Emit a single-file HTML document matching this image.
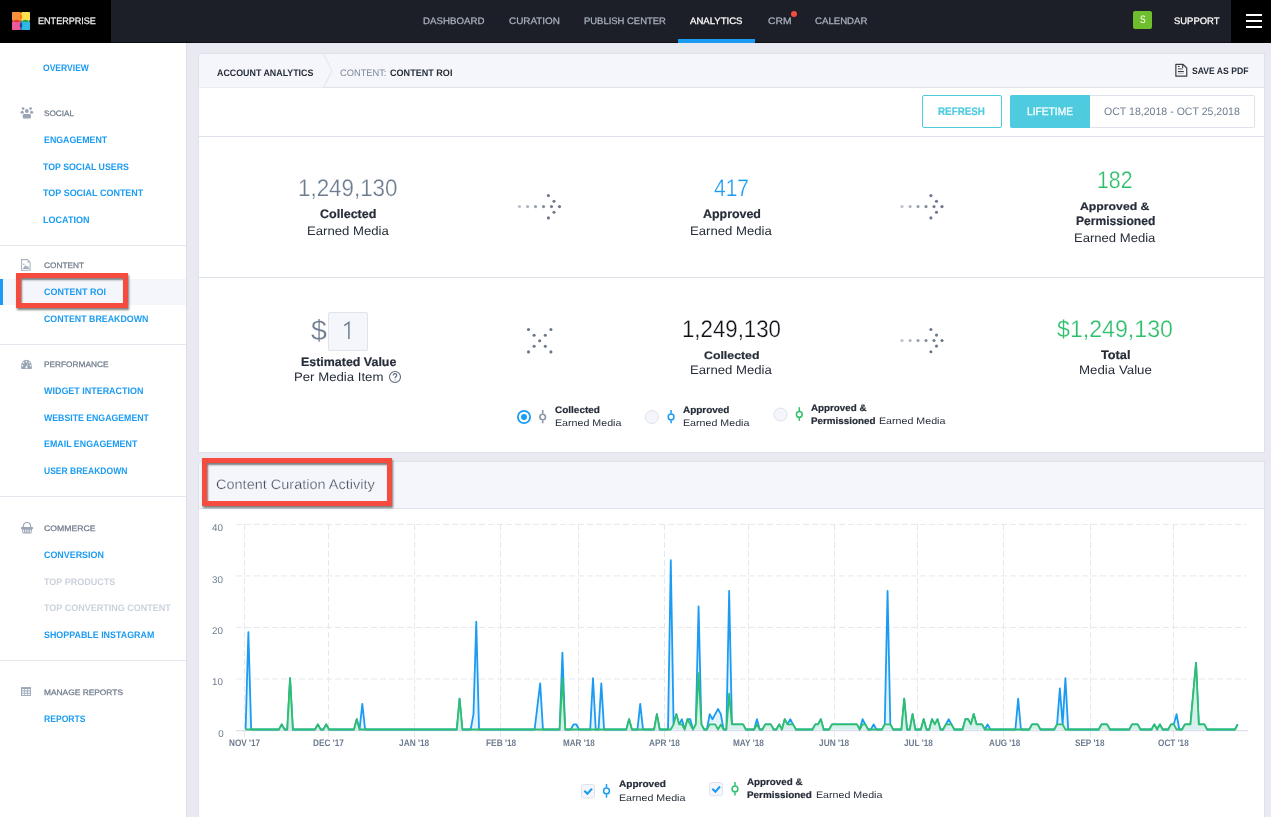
<!DOCTYPE html>
<html><head><meta charset="utf-8">
<style>
html,body{margin:0;padding:0;}
body{width:1271px;height:817px;overflow:hidden;position:relative;background:#e8e9f1;font-family:"Liberation Sans",sans-serif;text-rendering:geometricPrecision;}
.abs{position:absolute;}
.t{position:absolute;white-space:nowrap;transform-origin:0 0;line-height:1;}
</style></head><body>
<!-- NAV -->
<div class="abs" style="left:0;top:0;width:1271px;height:42px;background:#1c1f27;border-bottom:1px solid #0d0f14;"></div>
<div class="abs" style="left:0;top:0;width:111px;height:43px;background:#000;"></div>
<div class="abs" style="left:1231px;top:0;width:40px;height:43px;background:#000;"></div>
<div class="abs" style="left:678px;top:39px;width:77px;height:4px;background:#1b9cf2;"></div>
<div class="abs" style="left:791px;top:11.3px;width:6px;height:6px;border-radius:50%;background:#f64c3f;"></div>
<div class="abs" style="left:1133px;top:11px;width:19px;height:18px;border-radius:2px;background:#6fbe2d;"></div>
<div class="abs" style="left:1246px;top:14px;width:16px;height:2px;background:#fff;"></div>
<div class="abs" style="left:1246px;top:19.5px;width:16px;height:2px;background:#fff;"></div>
<div class="abs" style="left:1246px;top:25.5px;width:16px;height:2px;background:#fff;"></div>
<svg class="abs" style="left:12px;top:12px" width="18" height="18" viewBox="0 0 18 18">
 <g style="isolation:isolate">
 <path style="mix-blend-mode:multiply" d="M0.4,0 L8.3,0 Q12,4.5 8.7,8.7 Q4.5,12 0,8.3 L0,0.4 Z" fill="#f8913c"/>
 <path style="mix-blend-mode:multiply" d="M17.6,0 L9.7,0 Q6,4.5 9.3,8.7 Q13.5,12 18,8.3 L18,0.4 Z" fill="#fde24e"/>
 <path style="mix-blend-mode:multiply" d="M0.4,18 L8.3,18 Q12,13.5 8.7,9.3 Q4.5,6 0,9.7 L0,17.6 Z" fill="#eb5b9c"/>
 <path style="mix-blend-mode:multiply" d="M17.6,18 L9.7,18 Q6,13.5 9.3,9.3 Q13.5,6 18,9.7 L18,17.6 Z" fill="#2cb9e6"/>
 </g>
</svg>

<!-- SIDEBAR -->
<div class="abs" style="left:0;top:43px;width:186px;height:774px;background:#fff;border-right:1px solid #dde0ea;"></div>
<div class="abs" style="left:0;top:245px;width:186px;height:1px;background:#e4e7ee;"></div>
<div class="abs" style="left:0;top:344px;width:186px;height:1px;background:#e4e7ee;"></div>
<div class="abs" style="left:0;top:496px;width:186px;height:1px;background:#e4e7ee;"></div>
<div class="abs" style="left:0;top:660px;width:186px;height:1px;background:#e4e7ee;"></div>
<div class="abs" style="left:0;top:279px;width:186px;height:26px;background:#f5f6fb;"></div>
<div class="abs" style="left:0;top:279px;width:3px;height:26px;background:#1b9cf2;"></div>
<svg class="abs" style="left:0;top:0" width="186" height="817" viewBox="0 0 186 817">
 <g fill="#9aa6b6">
  <circle cx="23.1" cy="108.6" r="1.4"/><circle cx="30.6" cy="108.6" r="1.4"/>
  <circle cx="26.8" cy="110.9" r="2.0"/>
  <ellipse cx="22.2" cy="112.2" rx="1.6" ry="1.5"/><ellipse cx="31.6" cy="112.2" rx="1.6" ry="1.5"/>
  <rect x="22.7" y="113.9" width="8.3" height="4.6" rx="1.5"/>
 </g>
 <g fill="none" stroke="#a9b3c1" stroke-width="1.1">
  <path d="M21.5,259.6 H27.5 L30.1,262.3 V270.2 H21.5 Z"/>
 </g>
 <g fill="#a3adbb">
  <path d="M22.8,269 L25.2,265 L27,267 L28,265.6 L29,269 Z"/>
  <circle cx="23.7" cy="264.2" r="0.8"/>
  <circle cx="28" cy="262" r="0.8"/>
 </g>
 <path d="M21.2,369 C20.4,362.5 23.6,359.8 26.45,359.8 C29.3,359.8 32.5,362.5 31.7,369 Z" fill="#9aa6b6"/>
 <g fill="#fff"><circle cx="22.4" cy="365.6" r="0.8"/><circle cx="23.6" cy="362.8" r="0.8"/><circle cx="26.45" cy="361.6" r="0.8"/><circle cx="29.3" cy="362.8" r="0.8"/><circle cx="30.5" cy="365.6" r="0.8"/>
 <path d="M26,367.8 L27.8,362.5 L27,367.8 Z" /><circle cx="26.4" cy="367.6" r="1"/></g>
 <g fill="#9aa6b6">
  <path d="M23.3,527 Q23.3,522.5 27,522.5 Q30.7,522.5 30.7,527" fill="none" stroke="#9aa6b6" stroke-width="1.1"/>
  <rect x="21" y="527" width="12" height="1.9" rx="0.5"/>
  <path d="M21.8,528.8 H32.2 L31.3,533.6 H22.7 Z"/>
 </g>
 <g fill="#fff"><rect x="23.2" y="529.6" width="0.9" height="2.9"/><rect x="25.4" y="529.6" width="0.9" height="2.9"/><rect x="27.6" y="529.6" width="0.9" height="2.9"/><rect x="29.8" y="529.6" width="0.9" height="2.9"/></g>
 <g>
  <rect x="21" y="687.1" width="10" height="8.8" fill="#9aa6b6"/>
  <g fill="#fff">
   <rect x="22" y="689.1" width="2.3" height="1.3"/><rect x="24.9" y="689.1" width="2.3" height="1.3"/><rect x="27.8" y="689.1" width="2.3" height="1.3"/>
   <rect x="22" y="691.3" width="2.3" height="1.6" fill="#e9edf2"/><rect x="24.9" y="691.3" width="2.3" height="1.6" fill="#e9edf2"/><rect x="27.8" y="691.3" width="2.3" height="1.6" fill="#e9edf2"/>
   <rect x="22" y="693.7" width="2.3" height="1.3"/><rect x="24.9" y="693.7" width="2.3" height="1.3"/><rect x="27.8" y="693.7" width="2.3" height="1.3"/>
  </g>
 </g>
</svg>
<div class="abs" style="left:16px;top:273px;width:102px;height:25px;border:5px solid #f64c3f;box-shadow:1px 2px 2px rgba(0,0,0,.5), inset 1px 2px 2px rgba(0,0,0,.5);"></div>

<!-- PANEL 1 -->
<div class="abs" style="left:198px;top:53px;width:1065px;height:398px;background:#fff;border:1px solid #dfe2ea;"></div>
<div class="abs" style="left:199px;top:54px;width:1065px;height:33px;background:#f5f6fb;border-bottom:1px solid #dfe2ea;"></div>
<svg class="abs" style="left:199px;top:54px" width="150" height="34" viewBox="0 0 150 34">
 <path d="M0,0 H124.5 L133,16.8 L124.5,33.5 H0 Z" fill="#f5f6fb" stroke="none"/>
 <path d="M124.5,0 L133,16.8 L124.5,33.5" fill="none" stroke="#dfe2ea" stroke-width="1"/>
</svg>
<div class="abs" style="left:199px;top:136px;width:1065px;height:1px;background:#dfe2ea;"></div>
<div class="abs" style="left:199px;top:277px;width:1065px;height:1px;background:#dfe2ea;"></div>
<!-- pdf icon -->
<svg class="abs" style="left:1174px;top:63px" width="15" height="15" viewBox="0 0 15 15">
 <path d="M1.85,1.45 H9.1 L12.75,5 V13.2 H1.85 Z" fill="none" stroke="#3a3f47" stroke-width="1.2" stroke-linejoin="round"/>
 <path d="M8.7,1.4 V4.9" fill="none" stroke="#3a3f47" stroke-width="1.1"/>
 <rect x="3.9" y="2.9" width="1.9" height="1.0" fill="#3a3f47"/>
 <rect x="3.9" y="5.4" width="4.8" height="1.0" fill="#4a4f57"/>
 <rect x="3.9" y="8.0" width="5.9" height="1.0" fill="#3a3f47"/>
 <rect x="3.9" y="9.7" width="5.9" height="0.9" fill="#a0a4ab"/>
</svg>
<!-- buttons -->
<div class="abs" style="left:922px;top:95px;width:78px;height:31px;border:1px solid #4fcbe0;border-radius:2px;background:#fff;"></div>
<div class="abs" style="left:1090px;top:95px;width:164px;height:31px;border:1px solid #dfe2ea;border-left:none;border-radius:0 2px 2px 0;background:#fff;"></div>
<div class="abs" style="left:1010px;top:95px;width:80px;height:33px;background:#4fcbe0;border-radius:2px 0 0 2px;"></div>
<!-- input box -->
<div class="abs" style="left:328px;top:312px;width:38px;height:37px;border:1px solid #dfe3ec;border-radius:2px;background:#f5f6fb;"></div>
<svg class="abs" style="left:388px;top:370px" width="14" height="14" viewBox="0 0 14 14">
 <circle cx="7" cy="7" r="5.5" fill="none" stroke="#5f6b7e" stroke-width="1.1"/>
 <path d="M5.2,5.4 Q5.2,3.6 7,3.6 Q8.8,3.6 8.8,5.2 Q8.8,6.3 7.5,6.9 Q7,7.2 7,8.2" fill="none" stroke="#5f6b7e" stroke-width="1.2"/>
 <circle cx="7" cy="9.9" r="0.7" fill="#9aa3b0"/>
</svg>
<svg class="abs" style="left:340px;top:318px" width="14" height="24" viewBox="340 318 14 24"><path d="M344.3,325.6 L348.9,322.4 V339" fill="none" stroke="#6e7c8f" stroke-width="1.5" stroke-linejoin="miter"/></svg>
<!-- legend -->
<svg class="abs" style="left:0;top:0" width="1271" height="817" viewBox="0 0 1271 817">
 <circle cx="524" cy="417" r="6.1" fill="#fff" stroke="#1b9cf2" stroke-width="1.8"/>
 <circle cx="524" cy="417" r="3" fill="#1b9cf2"/>
 <g stroke="#8a95a5" stroke-width="1.6" fill="none"><line x1="542.7" y1="410" x2="542.7" y2="413.6"/><line x1="542.7" y1="420.4" x2="542.7" y2="423.2"/><circle cx="542.7" cy="417" r="2.8" fill="#fff"/></g>
 <circle cx="651.9" cy="417" r="6.5" fill="#f5f6fb" stroke="#dfe3ee" stroke-width="1"/>
 <g stroke="#1b9cf2" stroke-width="1.5" fill="none"><line x1="671.1" y1="410" x2="671.1" y2="413.6"/><line x1="671.1" y1="420.4" x2="671.1" y2="423.2"/><circle cx="671.1" cy="417" r="2.9" fill="#fff"/></g>
 <circle cx="780.5" cy="414.6" r="6.5" fill="#f5f6fb" stroke="#dfe3ee" stroke-width="1"/>
 <g stroke="#2fbf6b" stroke-width="1.5" fill="none"><line x1="799.3" y1="407.2" x2="799.3" y2="411"/><line x1="799.3" y1="417.8" x2="799.3" y2="420.8"/><circle cx="799.3" cy="414.4" r="2.9" fill="#fff"/></g>
</svg>
<svg class="abs" style="left:0;top:0" width="1271" height="817" viewBox="0 0 1271 817">
<circle cx="519.5" cy="206.6" r="1.55" fill="#6b7789" fill-opacity="0.45"/><circle cx="527.6" cy="206.6" r="1.55" fill="#6b7789" fill-opacity="0.55"/><circle cx="535.5" cy="206.6" r="1.55" fill="#6b7789" fill-opacity="0.7"/><circle cx="543.5" cy="206.6" r="1.55" fill="#6b7789" fill-opacity="0.85"/><circle cx="551.5" cy="206.6" r="1.55" fill="#6b7789" fill-opacity="0.95"/><circle cx="559.5" cy="206.6" r="1.55" fill="#6b7789" fill-opacity="1"/><circle cx="548.4" cy="195.6" r="1.55" fill="#6b7789"/><circle cx="554.0" cy="201.2" r="1.55" fill="#6b7789"/><circle cx="554.0" cy="212.2" r="1.55" fill="#6b7789"/><circle cx="548.4" cy="217.9" r="1.55" fill="#6b7789"/>
<circle cx="902.0" cy="206.6" r="1.55" fill="#6b7789" fill-opacity="0.45"/><circle cx="910.1" cy="206.6" r="1.55" fill="#6b7789" fill-opacity="0.55"/><circle cx="918.0" cy="206.6" r="1.55" fill="#6b7789" fill-opacity="0.7"/><circle cx="926.0" cy="206.6" r="1.55" fill="#6b7789" fill-opacity="0.85"/><circle cx="934.0" cy="206.6" r="1.55" fill="#6b7789" fill-opacity="0.95"/><circle cx="942.0" cy="206.6" r="1.55" fill="#6b7789" fill-opacity="1"/><circle cx="930.9" cy="195.6" r="1.55" fill="#6b7789"/><circle cx="936.5" cy="201.2" r="1.55" fill="#6b7789"/><circle cx="936.5" cy="212.2" r="1.55" fill="#6b7789"/><circle cx="930.9" cy="217.9" r="1.55" fill="#6b7789"/>
<circle cx="539.7" cy="340.7" r="1.55" fill="#6b7789"/><circle cx="528.5" cy="329.5" r="1.55" fill="#6b7789"/><circle cx="534.1" cy="335.2" r="1.55" fill="#6b7789"/><circle cx="545.3" cy="335.2" r="1.55" fill="#6b7789"/><circle cx="550.9" cy="329.5" r="1.55" fill="#6b7789"/><circle cx="534.1" cy="346.3" r="1.55" fill="#6b7789"/><circle cx="545.3" cy="346.3" r="1.55" fill="#6b7789"/><circle cx="528.5" cy="351.9" r="1.55" fill="#6b7789"/><circle cx="550.9" cy="351.9" r="1.55" fill="#6b7789"/>
<circle cx="902.0" cy="340.5" r="1.55" fill="#6b7789" fill-opacity="0.45"/><circle cx="910.1" cy="340.5" r="1.55" fill="#6b7789" fill-opacity="0.55"/><circle cx="918.0" cy="340.5" r="1.55" fill="#6b7789" fill-opacity="0.7"/><circle cx="926.0" cy="340.5" r="1.55" fill="#6b7789" fill-opacity="0.85"/><circle cx="934.0" cy="340.5" r="1.55" fill="#6b7789" fill-opacity="0.95"/><circle cx="942.0" cy="340.5" r="1.55" fill="#6b7789" fill-opacity="1"/><circle cx="930.9" cy="329.5" r="1.55" fill="#6b7789"/><circle cx="936.5" cy="335.1" r="1.55" fill="#6b7789"/><circle cx="936.5" cy="346.1" r="1.55" fill="#6b7789"/><circle cx="930.9" cy="351.8" r="1.55" fill="#6b7789"/>
</svg>

<!-- PANEL 2 -->
<div class="abs" style="left:198px;top:461px;width:1065px;height:370px;background:#fff;border:1px solid #dfe2ea;"></div>
<div class="abs" style="left:199px;top:462px;width:1065px;height:46px;background:#f5f6fb;border-bottom:1px solid #dfe2ea;"></div>
<svg class="abs" style="left:0;top:0" width="1271" height="817" viewBox="0 0 1271 817">
<g stroke="#e6e8ef" stroke-width="1" stroke-dasharray="6 3" fill="none"><line x1="236" y1="678.97" x2="1246" y2="678.97" /><line x1="236" y1="627.44" x2="1246" y2="627.44" /><line x1="236" y1="575.91" x2="1246" y2="575.91" /><line x1="236" y1="524.38" x2="1246" y2="524.38" /><line x1="244.5" y1="524" x2="244.5" y2="738" /><line x1="328.5" y1="524" x2="328.5" y2="738" /><line x1="414.5" y1="524" x2="414.5" y2="738" /><line x1="500.5" y1="524" x2="500.5" y2="738" /><line x1="578.5" y1="524" x2="578.5" y2="738" /><line x1="664.5" y1="524" x2="664.5" y2="738" /><line x1="748.5" y1="524" x2="748.5" y2="738" /><line x1="834.5" y1="524" x2="834.5" y2="738" /><line x1="917.5" y1="524" x2="917.5" y2="738" /><line x1="1003.5" y1="524" x2="1003.5" y2="738" /><line x1="1090.5" y1="524" x2="1090.5" y2="738" /><line x1="1173.5" y1="524" x2="1173.5" y2="738" /></g>
<line x1="236" y1="730.6" x2="1248" y2="730.6" stroke="#dde0ec" stroke-width="1.2"/>
<path d="M245.60,729.5 L245.60,729.50 248.38,632.03 251.16,729.50 253.94,729.50 256.72,729.50 259.50,729.50 262.27,729.50 265.05,729.50 267.83,729.50 270.61,729.50 273.39,729.50 276.17,729.50 278.95,729.50 281.73,724.37 284.51,729.50 287.28,729.50 290.06,678.20 292.84,729.50 295.62,729.50 298.40,729.50 301.18,729.50 303.96,729.50 306.74,729.50 309.52,729.50 312.30,729.50 315.07,729.50 317.85,724.37 320.63,729.50 323.41,729.50 326.19,724.37 328.97,729.50 331.75,729.50 334.53,729.50 337.31,729.50 340.09,729.50 342.87,729.50 345.64,729.50 348.42,729.50 351.20,729.50 353.98,729.50 356.76,719.24 359.54,729.50 362.32,703.85 365.10,729.50 367.88,729.50 370.65,729.50 373.43,729.50 376.21,729.50 378.99,729.50 381.77,729.50 384.55,729.50 387.33,729.50 390.11,729.50 392.89,729.50 395.67,729.50 398.44,729.50 401.22,729.50 404.00,729.50 406.78,729.50 409.56,729.50 412.34,729.50 415.12,729.50 417.90,729.50 420.68,729.50 423.46,729.50 426.24,729.50 429.01,729.50 431.79,729.50 434.57,729.50 437.35,729.50 440.13,729.50 442.91,729.50 445.69,729.50 448.47,729.50 451.25,729.50 454.02,729.50 456.80,729.50 459.58,698.72 462.36,729.50 465.14,729.50 467.92,729.50 470.70,729.50 473.48,714.11 476.26,621.77 479.04,729.50 481.81,729.50 484.59,729.50 487.37,729.50 490.15,729.50 492.93,729.50 495.71,729.50 498.49,729.50 501.27,729.50 504.05,729.50 506.83,729.50 509.61,729.50 512.38,729.50 515.16,729.50 517.94,729.50 520.72,729.50 523.50,729.50 526.28,729.50 529.06,729.50 531.84,729.50 534.62,729.50 537.39,706.41 540.17,683.33 542.95,729.50 545.73,729.50 548.51,729.50 551.29,729.50 554.07,729.50 556.85,729.50 559.63,729.50 562.41,652.55 565.18,729.50 567.96,729.50 570.74,729.50 573.52,724.37 576.30,724.37 579.08,729.50 581.86,729.50 584.64,729.50 587.42,729.50 590.20,729.50 592.98,678.20 595.75,729.50 598.53,729.50 601.31,683.33 604.09,729.50 606.87,729.50 609.65,729.50 612.43,729.50 615.21,729.50 617.99,729.50 620.76,729.50 623.54,729.50 626.32,729.50 629.10,719.24 631.88,729.50 634.66,729.50 637.44,729.50 640.22,703.85 643.00,729.50 645.78,729.50 648.55,729.50 651.33,729.50 654.11,729.50 656.89,714.11 659.67,729.50 662.45,729.50 665.23,729.50 668.01,729.50 670.79,560.21 673.57,724.37 676.35,714.11 679.12,724.37 681.90,719.24 684.68,729.50 687.46,719.24 690.24,719.24 693.02,729.50 695.80,724.37 698.58,606.38 701.36,724.37 704.13,729.50 706.91,729.50 709.69,714.11 712.47,719.24 715.25,714.11 718.03,708.98 720.81,714.11 723.59,729.50 726.37,729.50 729.15,590.99 731.92,724.37 734.70,724.37 737.48,724.37 740.26,724.37 743.04,724.37 745.82,729.50 748.60,729.50 751.38,729.50 754.16,729.50 756.94,719.24 759.72,729.50 762.49,729.50 765.27,724.37 768.05,724.37 770.83,724.37 773.61,729.50 776.39,729.50 779.17,724.37 781.95,729.50 784.73,719.24 787.50,724.37 790.28,719.24 793.06,724.37 795.84,729.50 798.62,729.50 801.40,729.50 804.18,729.50 806.96,729.50 809.74,729.50 812.52,729.50 815.29,724.37 818.07,724.37 820.85,719.24 823.63,729.50 826.41,729.50 829.19,729.50 831.97,724.37 834.75,724.37 837.53,724.37 840.31,724.37 843.09,724.37 845.86,724.37 848.64,724.37 851.42,724.37 854.20,724.37 856.98,724.37 859.76,729.50 862.54,719.24 865.32,724.37 868.10,729.50 870.88,729.50 873.65,724.37 876.43,729.50 879.21,729.50 881.99,729.50 884.77,724.37 887.55,590.99 890.33,724.37 893.11,729.50 895.89,729.50 898.66,729.50 901.44,729.50 904.22,698.72 907.00,729.50 909.78,729.50 912.56,714.11 915.34,729.50 918.12,729.50 920.90,729.50 923.68,719.24 926.46,729.50 929.23,729.50 932.01,719.24 934.79,724.37 937.57,719.24 940.35,729.50 943.13,729.50 945.91,724.37 948.69,719.24 951.47,724.37 954.25,729.50 957.02,729.50 959.80,729.50 962.58,729.50 965.36,719.24 968.14,719.24 970.92,724.37 973.70,714.11 976.48,724.37 979.26,724.37 982.03,724.37 984.81,729.50 987.59,724.37 990.37,729.50 993.15,729.50 995.93,729.50 998.71,729.50 1001.49,729.50 1004.27,729.50 1007.05,729.50 1009.83,729.50 1012.60,729.50 1015.38,729.50 1018.16,698.72 1020.94,729.50 1023.72,729.50 1026.50,729.50 1029.28,729.50 1032.06,724.37 1034.84,724.37 1037.62,724.37 1040.39,729.50 1043.17,729.50 1045.95,729.50 1048.73,729.50 1051.51,729.50 1054.29,729.50 1057.07,724.37 1059.85,688.46 1062.63,724.37 1065.40,678.20 1068.18,729.50 1070.96,729.50 1073.74,729.50 1076.52,729.50 1079.30,729.50 1082.08,729.50 1084.86,729.50 1087.64,729.50 1090.42,729.50 1093.19,729.50 1095.97,729.50 1098.75,729.50 1101.53,724.37 1104.31,724.37 1107.09,724.37 1109.87,729.50 1112.65,729.50 1115.43,729.50 1118.21,729.50 1120.98,729.50 1123.76,729.50 1126.54,729.50 1129.32,729.50 1132.10,724.37 1134.88,724.37 1137.66,724.37 1140.44,729.50 1143.22,729.50 1146.00,729.50 1148.77,729.50 1151.55,729.50 1154.33,724.37 1157.11,729.50 1159.89,724.37 1162.67,729.50 1165.45,729.50 1168.23,729.50 1171.01,724.37 1173.79,724.37 1176.56,714.11 1179.34,729.50 1182.12,729.50 1184.90,724.37 1187.68,724.37 1190.46,724.37 1193.24,693.59 1196.02,662.81 1198.80,724.37 1201.58,724.37 1204.36,724.37 1207.13,729.50 1209.91,729.50 1212.69,729.50 1215.47,729.50 1218.25,729.50 1221.03,729.50 1223.81,729.50 1226.59,729.50 1229.37,729.50 1232.14,729.50 1234.92,729.50 1237.70,724.37 L1237.70,729.5 Z" fill="#e4f3fd" />
<polyline points="245.60,729.50 248.38,632.03 251.16,729.50 253.94,729.50 256.72,729.50 259.50,729.50 262.27,729.50 265.05,729.50 267.83,729.50 270.61,729.50 273.39,729.50 276.17,729.50 278.95,729.50 281.73,724.37 284.51,729.50 287.28,729.50 290.06,678.20 292.84,729.50 295.62,729.50 298.40,729.50 301.18,729.50 303.96,729.50 306.74,729.50 309.52,729.50 312.30,729.50 315.07,729.50 317.85,724.37 320.63,729.50 323.41,729.50 326.19,724.37 328.97,729.50 331.75,729.50 334.53,729.50 337.31,729.50 340.09,729.50 342.87,729.50 345.64,729.50 348.42,729.50 351.20,729.50 353.98,729.50 356.76,719.24 359.54,729.50 362.32,703.85 365.10,729.50 367.88,729.50 370.65,729.50 373.43,729.50 376.21,729.50 378.99,729.50 381.77,729.50 384.55,729.50 387.33,729.50 390.11,729.50 392.89,729.50 395.67,729.50 398.44,729.50 401.22,729.50 404.00,729.50 406.78,729.50 409.56,729.50 412.34,729.50 415.12,729.50 417.90,729.50 420.68,729.50 423.46,729.50 426.24,729.50 429.01,729.50 431.79,729.50 434.57,729.50 437.35,729.50 440.13,729.50 442.91,729.50 445.69,729.50 448.47,729.50 451.25,729.50 454.02,729.50 456.80,729.50 459.58,698.72 462.36,729.50 465.14,729.50 467.92,729.50 470.70,729.50 473.48,714.11 476.26,621.77 479.04,729.50 481.81,729.50 484.59,729.50 487.37,729.50 490.15,729.50 492.93,729.50 495.71,729.50 498.49,729.50 501.27,729.50 504.05,729.50 506.83,729.50 509.61,729.50 512.38,729.50 515.16,729.50 517.94,729.50 520.72,729.50 523.50,729.50 526.28,729.50 529.06,729.50 531.84,729.50 534.62,729.50 537.39,706.41 540.17,683.33 542.95,729.50 545.73,729.50 548.51,729.50 551.29,729.50 554.07,729.50 556.85,729.50 559.63,729.50 562.41,652.55 565.18,729.50 567.96,729.50 570.74,729.50 573.52,724.37 576.30,724.37 579.08,729.50 581.86,729.50 584.64,729.50 587.42,729.50 590.20,729.50 592.98,678.20 595.75,729.50 598.53,729.50 601.31,683.33 604.09,729.50 606.87,729.50 609.65,729.50 612.43,729.50 615.21,729.50 617.99,729.50 620.76,729.50 623.54,729.50 626.32,729.50 629.10,719.24 631.88,729.50 634.66,729.50 637.44,729.50 640.22,703.85 643.00,729.50 645.78,729.50 648.55,729.50 651.33,729.50 654.11,729.50 656.89,714.11 659.67,729.50 662.45,729.50 665.23,729.50 668.01,729.50 670.79,560.21 673.57,724.37 676.35,714.11 679.12,724.37 681.90,719.24 684.68,729.50 687.46,719.24 690.24,719.24 693.02,729.50 695.80,724.37 698.58,606.38 701.36,724.37 704.13,729.50 706.91,729.50 709.69,714.11 712.47,719.24 715.25,714.11 718.03,708.98 720.81,714.11 723.59,729.50 726.37,729.50 729.15,590.99 731.92,724.37 734.70,724.37 737.48,724.37 740.26,724.37 743.04,724.37 745.82,729.50 748.60,729.50 751.38,729.50 754.16,729.50 756.94,719.24 759.72,729.50 762.49,729.50 765.27,724.37 768.05,724.37 770.83,724.37 773.61,729.50 776.39,729.50 779.17,724.37 781.95,729.50 784.73,719.24 787.50,724.37 790.28,719.24 793.06,724.37 795.84,729.50 798.62,729.50 801.40,729.50 804.18,729.50 806.96,729.50 809.74,729.50 812.52,729.50 815.29,724.37 818.07,724.37 820.85,719.24 823.63,729.50 826.41,729.50 829.19,729.50 831.97,724.37 834.75,724.37 837.53,724.37 840.31,724.37 843.09,724.37 845.86,724.37 848.64,724.37 851.42,724.37 854.20,724.37 856.98,724.37 859.76,729.50 862.54,719.24 865.32,724.37 868.10,729.50 870.88,729.50 873.65,724.37 876.43,729.50 879.21,729.50 881.99,729.50 884.77,724.37 887.55,590.99 890.33,724.37 893.11,729.50 895.89,729.50 898.66,729.50 901.44,729.50 904.22,698.72 907.00,729.50 909.78,729.50 912.56,714.11 915.34,729.50 918.12,729.50 920.90,729.50 923.68,719.24 926.46,729.50 929.23,729.50 932.01,719.24 934.79,724.37 937.57,719.24 940.35,729.50 943.13,729.50 945.91,724.37 948.69,719.24 951.47,724.37 954.25,729.50 957.02,729.50 959.80,729.50 962.58,729.50 965.36,719.24 968.14,719.24 970.92,724.37 973.70,714.11 976.48,724.37 979.26,724.37 982.03,724.37 984.81,729.50 987.59,724.37 990.37,729.50 993.15,729.50 995.93,729.50 998.71,729.50 1001.49,729.50 1004.27,729.50 1007.05,729.50 1009.83,729.50 1012.60,729.50 1015.38,729.50 1018.16,698.72 1020.94,729.50 1023.72,729.50 1026.50,729.50 1029.28,729.50 1032.06,724.37 1034.84,724.37 1037.62,724.37 1040.39,729.50 1043.17,729.50 1045.95,729.50 1048.73,729.50 1051.51,729.50 1054.29,729.50 1057.07,724.37 1059.85,688.46 1062.63,724.37 1065.40,678.20 1068.18,729.50 1070.96,729.50 1073.74,729.50 1076.52,729.50 1079.30,729.50 1082.08,729.50 1084.86,729.50 1087.64,729.50 1090.42,729.50 1093.19,729.50 1095.97,729.50 1098.75,729.50 1101.53,724.37 1104.31,724.37 1107.09,724.37 1109.87,729.50 1112.65,729.50 1115.43,729.50 1118.21,729.50 1120.98,729.50 1123.76,729.50 1126.54,729.50 1129.32,729.50 1132.10,724.37 1134.88,724.37 1137.66,724.37 1140.44,729.50 1143.22,729.50 1146.00,729.50 1148.77,729.50 1151.55,729.50 1154.33,724.37 1157.11,729.50 1159.89,724.37 1162.67,729.50 1165.45,729.50 1168.23,729.50 1171.01,724.37 1173.79,724.37 1176.56,714.11 1179.34,729.50 1182.12,729.50 1184.90,724.37 1187.68,724.37 1190.46,724.37 1193.24,693.59 1196.02,662.81 1198.80,724.37 1201.58,724.37 1204.36,724.37 1207.13,729.50 1209.91,729.50 1212.69,729.50 1215.47,729.50 1218.25,729.50 1221.03,729.50 1223.81,729.50 1226.59,729.50 1229.37,729.50 1232.14,729.50 1234.92,729.50 1237.70,724.37" fill="none" stroke="#1b9cf2" stroke-width="1.8" stroke-linejoin="round"/>
<path d="M245.60,729.5 L245.60,729.50 248.38,729.50 251.16,729.50 253.94,729.50 256.72,729.50 259.50,729.50 262.27,729.50 265.05,729.50 267.83,729.50 270.61,729.50 273.39,729.50 276.17,729.50 278.95,729.50 281.73,724.37 284.51,729.50 287.28,729.50 290.06,678.20 292.84,729.50 295.62,729.50 298.40,729.50 301.18,729.50 303.96,729.50 306.74,729.50 309.52,729.50 312.30,729.50 315.07,729.50 317.85,724.37 320.63,729.50 323.41,729.50 326.19,724.37 328.97,729.50 331.75,729.50 334.53,729.50 337.31,729.50 340.09,729.50 342.87,729.50 345.64,729.50 348.42,729.50 351.20,729.50 353.98,729.50 356.76,719.24 359.54,729.50 362.32,729.50 365.10,729.50 367.88,729.50 370.65,729.50 373.43,729.50 376.21,729.50 378.99,729.50 381.77,729.50 384.55,729.50 387.33,729.50 390.11,729.50 392.89,729.50 395.67,729.50 398.44,729.50 401.22,729.50 404.00,729.50 406.78,729.50 409.56,729.50 412.34,729.50 415.12,729.50 417.90,729.50 420.68,729.50 423.46,729.50 426.24,729.50 429.01,729.50 431.79,729.50 434.57,729.50 437.35,729.50 440.13,729.50 442.91,729.50 445.69,729.50 448.47,729.50 451.25,729.50 454.02,729.50 456.80,729.50 459.58,698.72 462.36,729.50 465.14,729.50 467.92,729.50 470.70,729.50 473.48,729.50 476.26,729.50 479.04,729.50 481.81,729.50 484.59,729.50 487.37,729.50 490.15,729.50 492.93,729.50 495.71,729.50 498.49,729.50 501.27,729.50 504.05,729.50 506.83,729.50 509.61,729.50 512.38,729.50 515.16,729.50 517.94,729.50 520.72,729.50 523.50,729.50 526.28,729.50 529.06,729.50 531.84,729.50 534.62,729.50 537.39,729.50 540.17,729.50 542.95,729.50 545.73,729.50 548.51,729.50 551.29,729.50 554.07,729.50 556.85,729.50 559.63,729.50 562.41,678.20 565.18,729.50 567.96,729.50 570.74,729.50 573.52,729.50 576.30,729.50 579.08,729.50 581.86,729.50 584.64,729.50 587.42,729.50 590.20,729.50 592.98,729.50 595.75,729.50 598.53,729.50 601.31,729.50 604.09,729.50 606.87,729.50 609.65,729.50 612.43,729.50 615.21,729.50 617.99,729.50 620.76,729.50 623.54,729.50 626.32,729.50 629.10,719.24 631.88,729.50 634.66,729.50 637.44,729.50 640.22,729.50 643.00,729.50 645.78,729.50 648.55,729.50 651.33,729.50 654.11,729.50 656.89,714.11 659.67,729.50 662.45,729.50 665.23,729.50 668.01,729.50 670.79,729.50 673.57,724.37 676.35,714.11 679.12,724.37 681.90,724.37 684.68,729.50 687.46,719.24 690.24,724.37 693.02,729.50 695.80,724.37 698.58,673.07 701.36,724.37 704.13,729.50 706.91,729.50 709.69,724.37 712.47,724.37 715.25,724.37 718.03,729.50 720.81,724.37 723.59,729.50 726.37,729.50 729.15,693.59 731.92,724.37 734.70,724.37 737.48,724.37 740.26,724.37 743.04,724.37 745.82,729.50 748.60,729.50 751.38,729.50 754.16,729.50 756.94,724.37 759.72,729.50 762.49,729.50 765.27,724.37 768.05,724.37 770.83,724.37 773.61,729.50 776.39,729.50 779.17,724.37 781.95,729.50 784.73,719.24 787.50,724.37 790.28,724.37 793.06,724.37 795.84,729.50 798.62,729.50 801.40,729.50 804.18,729.50 806.96,729.50 809.74,729.50 812.52,729.50 815.29,724.37 818.07,724.37 820.85,719.24 823.63,729.50 826.41,729.50 829.19,729.50 831.97,724.37 834.75,724.37 837.53,724.37 840.31,724.37 843.09,724.37 845.86,724.37 848.64,724.37 851.42,724.37 854.20,724.37 856.98,724.37 859.76,729.50 862.54,724.37 865.32,724.37 868.10,729.50 870.88,729.50 873.65,729.50 876.43,729.50 879.21,729.50 881.99,729.50 884.77,724.37 887.55,724.37 890.33,724.37 893.11,729.50 895.89,729.50 898.66,729.50 901.44,729.50 904.22,698.72 907.00,729.50 909.78,729.50 912.56,714.11 915.34,729.50 918.12,729.50 920.90,729.50 923.68,719.24 926.46,729.50 929.23,729.50 932.01,719.24 934.79,724.37 937.57,719.24 940.35,729.50 943.13,729.50 945.91,724.37 948.69,724.37 951.47,724.37 954.25,729.50 957.02,729.50 959.80,729.50 962.58,729.50 965.36,719.24 968.14,719.24 970.92,724.37 973.70,714.11 976.48,724.37 979.26,724.37 982.03,724.37 984.81,729.50 987.59,729.50 990.37,729.50 993.15,729.50 995.93,729.50 998.71,729.50 1001.49,729.50 1004.27,729.50 1007.05,729.50 1009.83,729.50 1012.60,729.50 1015.38,729.50 1018.16,729.50 1020.94,729.50 1023.72,729.50 1026.50,729.50 1029.28,729.50 1032.06,724.37 1034.84,724.37 1037.62,724.37 1040.39,729.50 1043.17,729.50 1045.95,729.50 1048.73,729.50 1051.51,729.50 1054.29,729.50 1057.07,724.37 1059.85,724.37 1062.63,724.37 1065.40,729.50 1068.18,729.50 1070.96,729.50 1073.74,729.50 1076.52,729.50 1079.30,729.50 1082.08,729.50 1084.86,729.50 1087.64,729.50 1090.42,729.50 1093.19,729.50 1095.97,729.50 1098.75,729.50 1101.53,724.37 1104.31,724.37 1107.09,724.37 1109.87,729.50 1112.65,729.50 1115.43,729.50 1118.21,729.50 1120.98,729.50 1123.76,729.50 1126.54,729.50 1129.32,729.50 1132.10,724.37 1134.88,724.37 1137.66,724.37 1140.44,729.50 1143.22,729.50 1146.00,729.50 1148.77,729.50 1151.55,729.50 1154.33,724.37 1157.11,729.50 1159.89,724.37 1162.67,729.50 1165.45,729.50 1168.23,729.50 1171.01,724.37 1173.79,724.37 1176.56,729.50 1179.34,729.50 1182.12,729.50 1184.90,724.37 1187.68,724.37 1190.46,724.37 1193.24,693.59 1196.02,662.81 1198.80,724.37 1201.58,724.37 1204.36,724.37 1207.13,729.50 1209.91,729.50 1212.69,729.50 1215.47,729.50 1218.25,729.50 1221.03,729.50 1223.81,729.50 1226.59,729.50 1229.37,729.50 1232.14,729.50 1234.92,729.50 1237.70,724.37 L1237.70,729.5 Z" fill="#d4eeea" fill-opacity="0.85"/>
<polyline points="245.60,729.50 248.38,729.50 251.16,729.50 253.94,729.50 256.72,729.50 259.50,729.50 262.27,729.50 265.05,729.50 267.83,729.50 270.61,729.50 273.39,729.50 276.17,729.50 278.95,729.50 281.73,724.37 284.51,729.50 287.28,729.50 290.06,678.20 292.84,729.50 295.62,729.50 298.40,729.50 301.18,729.50 303.96,729.50 306.74,729.50 309.52,729.50 312.30,729.50 315.07,729.50 317.85,724.37 320.63,729.50 323.41,729.50 326.19,724.37 328.97,729.50 331.75,729.50 334.53,729.50 337.31,729.50 340.09,729.50 342.87,729.50 345.64,729.50 348.42,729.50 351.20,729.50 353.98,729.50 356.76,719.24 359.54,729.50 362.32,729.50 365.10,729.50 367.88,729.50 370.65,729.50 373.43,729.50 376.21,729.50 378.99,729.50 381.77,729.50 384.55,729.50 387.33,729.50 390.11,729.50 392.89,729.50 395.67,729.50 398.44,729.50 401.22,729.50 404.00,729.50 406.78,729.50 409.56,729.50 412.34,729.50 415.12,729.50 417.90,729.50 420.68,729.50 423.46,729.50 426.24,729.50 429.01,729.50 431.79,729.50 434.57,729.50 437.35,729.50 440.13,729.50 442.91,729.50 445.69,729.50 448.47,729.50 451.25,729.50 454.02,729.50 456.80,729.50 459.58,698.72 462.36,729.50 465.14,729.50 467.92,729.50 470.70,729.50 473.48,729.50 476.26,729.50 479.04,729.50 481.81,729.50 484.59,729.50 487.37,729.50 490.15,729.50 492.93,729.50 495.71,729.50 498.49,729.50 501.27,729.50 504.05,729.50 506.83,729.50 509.61,729.50 512.38,729.50 515.16,729.50 517.94,729.50 520.72,729.50 523.50,729.50 526.28,729.50 529.06,729.50 531.84,729.50 534.62,729.50 537.39,729.50 540.17,729.50 542.95,729.50 545.73,729.50 548.51,729.50 551.29,729.50 554.07,729.50 556.85,729.50 559.63,729.50 562.41,678.20 565.18,729.50 567.96,729.50 570.74,729.50 573.52,729.50 576.30,729.50 579.08,729.50 581.86,729.50 584.64,729.50 587.42,729.50 590.20,729.50 592.98,729.50 595.75,729.50 598.53,729.50 601.31,729.50 604.09,729.50 606.87,729.50 609.65,729.50 612.43,729.50 615.21,729.50 617.99,729.50 620.76,729.50 623.54,729.50 626.32,729.50 629.10,719.24 631.88,729.50 634.66,729.50 637.44,729.50 640.22,729.50 643.00,729.50 645.78,729.50 648.55,729.50 651.33,729.50 654.11,729.50 656.89,714.11 659.67,729.50 662.45,729.50 665.23,729.50 668.01,729.50 670.79,729.50 673.57,724.37 676.35,714.11 679.12,724.37 681.90,724.37 684.68,729.50 687.46,719.24 690.24,724.37 693.02,729.50 695.80,724.37 698.58,673.07 701.36,724.37 704.13,729.50 706.91,729.50 709.69,724.37 712.47,724.37 715.25,724.37 718.03,729.50 720.81,724.37 723.59,729.50 726.37,729.50 729.15,693.59 731.92,724.37 734.70,724.37 737.48,724.37 740.26,724.37 743.04,724.37 745.82,729.50 748.60,729.50 751.38,729.50 754.16,729.50 756.94,724.37 759.72,729.50 762.49,729.50 765.27,724.37 768.05,724.37 770.83,724.37 773.61,729.50 776.39,729.50 779.17,724.37 781.95,729.50 784.73,719.24 787.50,724.37 790.28,724.37 793.06,724.37 795.84,729.50 798.62,729.50 801.40,729.50 804.18,729.50 806.96,729.50 809.74,729.50 812.52,729.50 815.29,724.37 818.07,724.37 820.85,719.24 823.63,729.50 826.41,729.50 829.19,729.50 831.97,724.37 834.75,724.37 837.53,724.37 840.31,724.37 843.09,724.37 845.86,724.37 848.64,724.37 851.42,724.37 854.20,724.37 856.98,724.37 859.76,729.50 862.54,724.37 865.32,724.37 868.10,729.50 870.88,729.50 873.65,729.50 876.43,729.50 879.21,729.50 881.99,729.50 884.77,724.37 887.55,724.37 890.33,724.37 893.11,729.50 895.89,729.50 898.66,729.50 901.44,729.50 904.22,698.72 907.00,729.50 909.78,729.50 912.56,714.11 915.34,729.50 918.12,729.50 920.90,729.50 923.68,719.24 926.46,729.50 929.23,729.50 932.01,719.24 934.79,724.37 937.57,719.24 940.35,729.50 943.13,729.50 945.91,724.37 948.69,724.37 951.47,724.37 954.25,729.50 957.02,729.50 959.80,729.50 962.58,729.50 965.36,719.24 968.14,719.24 970.92,724.37 973.70,714.11 976.48,724.37 979.26,724.37 982.03,724.37 984.81,729.50 987.59,729.50 990.37,729.50 993.15,729.50 995.93,729.50 998.71,729.50 1001.49,729.50 1004.27,729.50 1007.05,729.50 1009.83,729.50 1012.60,729.50 1015.38,729.50 1018.16,729.50 1020.94,729.50 1023.72,729.50 1026.50,729.50 1029.28,729.50 1032.06,724.37 1034.84,724.37 1037.62,724.37 1040.39,729.50 1043.17,729.50 1045.95,729.50 1048.73,729.50 1051.51,729.50 1054.29,729.50 1057.07,724.37 1059.85,724.37 1062.63,724.37 1065.40,729.50 1068.18,729.50 1070.96,729.50 1073.74,729.50 1076.52,729.50 1079.30,729.50 1082.08,729.50 1084.86,729.50 1087.64,729.50 1090.42,729.50 1093.19,729.50 1095.97,729.50 1098.75,729.50 1101.53,724.37 1104.31,724.37 1107.09,724.37 1109.87,729.50 1112.65,729.50 1115.43,729.50 1118.21,729.50 1120.98,729.50 1123.76,729.50 1126.54,729.50 1129.32,729.50 1132.10,724.37 1134.88,724.37 1137.66,724.37 1140.44,729.50 1143.22,729.50 1146.00,729.50 1148.77,729.50 1151.55,729.50 1154.33,724.37 1157.11,729.50 1159.89,724.37 1162.67,729.50 1165.45,729.50 1168.23,729.50 1171.01,724.37 1173.79,724.37 1176.56,729.50 1179.34,729.50 1182.12,729.50 1184.90,724.37 1187.68,724.37 1190.46,724.37 1193.24,693.59 1196.02,662.81 1198.80,724.37 1201.58,724.37 1204.36,724.37 1207.13,729.50 1209.91,729.50 1212.69,729.50 1215.47,729.50 1218.25,729.50 1221.03,729.50 1223.81,729.50 1226.59,729.50 1229.37,729.50 1232.14,729.50 1234.92,729.50 1237.70,724.37" fill="none" stroke="#2fbf6b" stroke-width="1.8" stroke-linejoin="round"/>
</svg>
<svg class="abs" style="left:0;top:0" width="1271" height="817" viewBox="0 0 1271 817">
 <rect x="581.5" y="784.5" width="13" height="13.5" rx="2" fill="#f5f6fb" stroke="#dfe3ee" stroke-width="1"/>
 <path d="M584.3,790.8 L587.4,793.8 L592,788.6" fill="none" stroke="#1b9cf2" stroke-width="2.1"/>
 <g stroke="#1b9cf2" stroke-width="1.5" fill="none"><line x1="606.5" y1="784" x2="606.5" y2="787.6"/><line x1="606.5" y1="794.2" x2="606.5" y2="797.7"/><circle cx="606.5" cy="790.9" r="2.9" fill="#fff"/></g>
 <rect x="709.5" y="782.5" width="13" height="13.2" rx="2" fill="#f5f6fb" stroke="#dfe3ee" stroke-width="1"/>
 <path d="M712.3,788.7 L715.4,791.7 L720,786.5" fill="none" stroke="#1b9cf2" stroke-width="2.1"/>
 <g stroke="#2fbf6b" stroke-width="1.5" fill="none"><line x1="735" y1="782" x2="735" y2="785.6"/><line x1="735" y1="792.2" x2="735" y2="795.4"/><circle cx="735" cy="788.9" r="2.9" fill="#fff"/></g>
</svg>
<div class="abs" style="left:202px;top:458px;width:180px;height:38px;border:5px solid #f64c3f;box-shadow:1px 2px 2px rgba(0,0,0,.5), inset 1px 2px 2px rgba(0,0,0,.5);"></div>

<div class="t" style="left:38.00px;top:15.99px;font-size:9.420px;color:#f2f2f2;transform:scaleX(0.9636);-webkit-text-stroke:0.25px currentColor;">ENTERPRISE</div>
<div class="t" style="left:422.50px;top:15.99px;font-size:9.420px;color:#a9b1be;transform:scaleX(1.0306);-webkit-text-stroke:0.25px currentColor;">DASHBOARD</div>
<div class="t" style="left:509.00px;top:15.99px;font-size:9.420px;color:#a9b1be;transform:scaleX(1.0515);-webkit-text-stroke:0.25px currentColor;">CURATION</div>
<div class="t" style="left:584.00px;top:15.99px;font-size:9.420px;color:#a9b1be;transform:scaleX(1.0041);-webkit-text-stroke:0.25px currentColor;">PUBLISH CENTER</div>
<div class="t" style="left:690.00px;top:15.99px;font-size:9.420px;color:#ffffff;transform:scaleX(1.0162);-webkit-text-stroke:0.25px currentColor;">ANALYTICS</div>
<div class="t" style="left:767.50px;top:15.99px;font-size:9.420px;color:#a9b1be;transform:scaleX(1.0978);-webkit-text-stroke:0.25px currentColor;">CRM</div>
<div class="t" style="left:814.50px;top:15.99px;font-size:9.420px;color:#a9b1be;transform:scaleX(1.0236);-webkit-text-stroke:0.25px currentColor;">CALENDAR</div>
<div class="t" style="left:1173.50px;top:15.99px;font-size:9.420px;color:#ffffff;transform:scaleX(1.0032);-webkit-text-stroke:0.25px currentColor;">SUPPORT</div>
<div class="t" style="left:1140.00px;top:14.76px;font-size:10.870px;color:#ffffff;transform:scaleX(0.7708);">S</div>
<div class="t" style="left:43.00px;top:62.99px;font-size:9.420px;color:#1b9cf2;font-weight:bold;transform:scaleX(0.9085);">OVERVIEW</div>
<div class="t" style="left:44.25px;top:134.99px;font-size:9.420px;color:#1b9cf2;font-weight:bold;transform:scaleX(0.9371);">ENGAGEMENT</div>
<div class="t" style="left:43.00px;top:161.99px;font-size:9.420px;color:#1b9cf2;font-weight:bold;transform:scaleX(0.9335);">TOP SOCIAL USERS</div>
<div class="t" style="left:43.00px;top:187.99px;font-size:9.420px;color:#1b9cf2;font-weight:bold;transform:scaleX(0.9551);">TOP SOCIAL CONTENT</div>
<div class="t" style="left:43.00px;top:214.99px;font-size:9.420px;color:#1b9cf2;font-weight:bold;transform:scaleX(0.9587);">LOCATION</div>
<div class="t" style="left:43.50px;top:286.99px;font-size:9.420px;color:#1b9cf2;font-weight:bold;transform:scaleX(0.9554);">CONTENT ROI</div>
<div class="t" style="left:43.50px;top:313.99px;font-size:9.420px;color:#1b9cf2;font-weight:bold;transform:scaleX(0.9375);">CONTENT BREAKDOWN</div>
<div class="t" style="left:43.50px;top:385.99px;font-size:9.420px;color:#1b9cf2;font-weight:bold;transform:scaleX(0.9508);">WIDGET INTERACTION</div>
<div class="t" style="left:43.50px;top:412.99px;font-size:9.420px;color:#1b9cf2;font-weight:bold;transform:scaleX(0.9289);">WEBSITE ENGAGEMENT</div>
<div class="t" style="left:43.50px;top:438.99px;font-size:9.420px;color:#1b9cf2;font-weight:bold;transform:scaleX(0.9417);">EMAIL ENGAGEMENT</div>
<div class="t" style="left:43.50px;top:465.99px;font-size:9.420px;color:#1b9cf2;font-weight:bold;transform:scaleX(0.9064);">USER BREAKDOWN</div>
<div class="t" style="left:43.50px;top:549.99px;font-size:9.420px;color:#1b9cf2;font-weight:bold;transform:scaleX(0.9473);">CONVERSION</div>
<div class="t" style="left:43.50px;top:576.99px;font-size:9.420px;color:#cbd2dc;font-weight:bold;transform:scaleX(0.9596);">TOP PRODUCTS</div>
<div class="t" style="left:43.50px;top:602.99px;font-size:9.420px;color:#cbd2dc;font-weight:bold;transform:scaleX(0.9579);">TOP CONVERTING CONTENT</div>
<div class="t" style="left:43.50px;top:629.99px;font-size:9.420px;color:#1b9cf2;font-weight:bold;transform:scaleX(0.9452);">SHOPPABLE INSTAGRAM</div>
<div class="t" style="left:43.50px;top:713.99px;font-size:9.420px;color:#1b9cf2;font-weight:bold;transform:scaleX(0.9114);">REPORTS</div>
<div class="t" style="left:43.50px;top:110.22px;font-size:7.971px;color:#6f7b8c;transform:scaleX(1.0262);-webkit-text-stroke:0.25px currentColor;">SOCIAL</div>
<div class="t" style="left:43.50px;top:262.22px;font-size:7.971px;color:#6f7b8c;transform:scaleX(1.0381);-webkit-text-stroke:0.25px currentColor;">CONTENT</div>
<div class="t" style="left:43.50px;top:361.22px;font-size:7.971px;color:#6f7b8c;transform:scaleX(1.0402);-webkit-text-stroke:0.25px currentColor;">PERFORMANCE</div>
<div class="t" style="left:43.50px;top:525.22px;font-size:7.971px;color:#6f7b8c;transform:scaleX(1.0870);-webkit-text-stroke:0.25px currentColor;">COMMERCE</div>
<div class="t" style="left:43.50px;top:689.22px;font-size:7.971px;color:#6f7b8c;transform:scaleX(1.0511);-webkit-text-stroke:0.25px currentColor;">MANAGE REPORTS</div>
<div class="t" style="left:217.00px;top:67.99px;font-size:9.420px;color:#262d39;font-weight:bold;transform:scaleX(0.9424);">ACCOUNT ANALYTICS</div>
<div class="t" style="left:339.50px;top:67.99px;font-size:9.420px;color:#7d8798;transform:scaleX(0.9875);">CONTENT:</div>
<div class="t" style="left:389.50px;top:67.99px;font-size:9.420px;color:#262d39;font-weight:bold;transform:scaleX(0.9631);">CONTENT ROI</div>
<div class="t" style="left:1191.50px;top:65.99px;font-size:9.420px;color:#262d39;font-weight:bold;transform:scaleX(0.9152);">SAVE AS PDF</div>
<div class="t" style="left:938.00px;top:106.76px;font-size:10.870px;color:#4fcbe0;font-weight:bold;transform:scaleX(0.9048);-webkit-text-stroke:0.2px currentColor;">REFRESH</div>
<div class="t" style="left:1026.50px;top:106.76px;font-size:10.870px;color:#ffffff;transform:scaleX(0.9407);-webkit-text-stroke:0.25px currentColor;">LIFETIME</div>
<div class="t" style="left:1104.00px;top:106.76px;font-size:10.870px;color:#6e7c8f;transform:scaleX(0.9730);">OCT 18,2018 - OCT 25,2018</div>
<div class="t" style="left:298.00px;top:176.67px;font-size:23.913px;color:#6e7c8f;transform:scaleX(0.9354);-webkit-text-stroke:0.25px #fff;">1,249,130</div>
<div class="t" style="left:320.00px;top:207.53px;font-size:12.319px;color:#262d39;font-weight:bold;transform:scaleX(1.0194);-webkit-text-stroke:0.2px currentColor;">Collected</div>
<div class="t" style="left:307.00px;top:224.53px;font-size:12.319px;color:#262d39;transform:scaleX(1.0686);">Earned Media</div>
<div class="t" style="left:714.00px;top:176.67px;font-size:23.913px;color:#1b9cf2;transform:scaleX(0.8767);-webkit-text-stroke:0.25px #fff;">417</div>
<div class="t" style="left:703.00px;top:207.53px;font-size:12.319px;color:#262d39;font-weight:bold;transform:scaleX(1.0094);-webkit-text-stroke:0.2px currentColor;">Approved</div>
<div class="t" style="left:689.50px;top:224.53px;font-size:12.319px;color:#262d39;transform:scaleX(1.0687);">Earned Media</div>
<div class="t" style="left:1096.50px;top:168.67px;font-size:23.913px;color:#2fbf6b;transform:scaleX(0.8904);-webkit-text-stroke:0.25px #fff;">182</div>
<div class="t" style="left:1079.50px;top:201.76px;font-size:10.870px;color:#262d39;font-weight:bold;transform:scaleX(1.1288);-webkit-text-stroke:0.2px currentColor;">Approved &</div>
<div class="t" style="left:1075.50px;top:214.53px;font-size:12.319px;color:#262d39;font-weight:bold;transform:scaleX(0.9838);-webkit-text-stroke:0.2px currentColor;">Permissioned</div>
<div class="t" style="left:1073.50px;top:231.53px;font-size:12.319px;color:#262d39;transform:scaleX(1.0622);">Earned Media</div>
<div class="t" style="left:300.50px;top:355.53px;font-size:12.319px;color:#262d39;font-weight:bold;transform:scaleX(1.0108);-webkit-text-stroke:0.2px currentColor;">Estimated Value</div>
<div class="t" style="left:294.00px;top:370.53px;font-size:12.319px;color:#262d39;transform:scaleX(1.0718);">Per Media Item</div>
<div class="t" style="left:681.50px;top:317.67px;font-size:23.913px;color:#111318;transform:scaleX(0.9306);-webkit-text-stroke:0.25px #fff;">1,249,130</div>
<div class="t" style="left:703.50px;top:350.76px;font-size:10.870px;color:#262d39;font-weight:bold;transform:scaleX(1.1348);-webkit-text-stroke:0.2px currentColor;">Collected</div>
<div class="t" style="left:689.50px;top:363.53px;font-size:12.319px;color:#262d39;transform:scaleX(1.0687);">Earned Media</div>
<div class="t" style="left:1057.00px;top:317.67px;font-size:23.913px;color:#2fbf6b;transform:scaleX(0.9692);-webkit-text-stroke:0.25px #fff;">$1,249,130</div>
<div class="t" style="left:1100.50px;top:348.53px;font-size:12.319px;color:#262d39;font-weight:bold;transform:scaleX(1.0346);-webkit-text-stroke:0.2px currentColor;">Total</div>
<div class="t" style="left:1078.50px;top:363.53px;font-size:12.319px;color:#262d39;transform:scaleX(1.0809);">Media Value</div>
<div class="t" style="left:555.00px;top:404.99px;font-size:9.420px;color:#262d39;font-weight:bold;transform:scaleX(1.0617);-webkit-text-stroke:0.2px currentColor;">Collected</div>
<div class="t" style="left:555.00px;top:417.99px;font-size:9.420px;color:#262d39;transform:scaleX(1.1331);">Earned Media</div>
<div class="t" style="left:683.00px;top:404.99px;font-size:9.420px;color:#262d39;font-weight:bold;transform:scaleX(1.0582);-webkit-text-stroke:0.2px currentColor;">Approved</div>
<div class="t" style="left:683.00px;top:417.99px;font-size:9.420px;color:#262d39;transform:scaleX(1.1332);">Earned Media</div>
<div class="t" style="left:811.00px;top:402.99px;font-size:9.420px;color:#262d39;font-weight:bold;transform:scaleX(1.0405);-webkit-text-stroke:0.2px currentColor;">Approved &</div>
<div class="t" style="left:811.00px;top:415.99px;font-size:9.420px;color:#262d39;font-weight:bold;transform:scaleX(1.0438);-webkit-text-stroke:0.2px currentColor;">Permissioned</div>
<div class="t" style="left:879.00px;top:415.99px;font-size:9.420px;color:#262d39;transform:scaleX(1.1332);">Earned Media</div>
<div class="t" style="left:216.00px;top:478.30px;font-size:13.768px;color:#3c4454;transform:scaleX(1.0547);-webkit-text-stroke:0.3px #f5f6fb;">Content Curation Activity</div>
<div class="t" style="left:212.11px;top:523.67px;font-size:9.800px;color:#6e7c8f;">40</div>
<div class="t" style="left:212.11px;top:575.67px;font-size:9.800px;color:#6e7c8f;">30</div>
<div class="t" style="left:212.11px;top:626.67px;font-size:9.800px;color:#6e7c8f;">20</div>
<div class="t" style="left:212.11px;top:677.67px;font-size:9.800px;color:#6e7c8f;">10</div>
<div class="t" style="left:218.31px;top:729.67px;font-size:9.800px;color:#6e7c8f;">0</div>
<div class="t" style="left:228.94px;top:737.99px;font-size:9.420px;color:#6e7c8f;font-weight:bold;transform:scaleX(0.8708);">NOV '17</div>
<div class="t" style="left:313.08px;top:737.99px;font-size:9.420px;color:#6e7c8f;font-weight:bold;transform:scaleX(0.8752);">DEC '17</div>
<div class="t" style="left:399.26px;top:737.99px;font-size:9.420px;color:#6e7c8f;font-weight:bold;transform:scaleX(0.8856);">JAN '18</div>
<div class="t" style="left:486.16px;top:737.99px;font-size:9.420px;color:#6e7c8f;font-weight:bold;transform:scaleX(0.8856);">FEB '18</div>
<div class="t" style="left:562.67px;top:737.99px;font-size:9.420px;color:#6e7c8f;font-weight:bold;transform:scaleX(0.8615);">MAR '18</div>
<div class="t" style="left:648.98px;top:737.99px;font-size:9.420px;color:#6e7c8f;font-weight:bold;transform:scaleX(0.8752);">APR '18</div>
<div class="t" style="left:732.98px;top:737.99px;font-size:9.420px;color:#6e7c8f;font-weight:bold;transform:scaleX(0.8752);">MAY '18</div>
<div class="t" style="left:819.16px;top:737.99px;font-size:9.420px;color:#6e7c8f;font-weight:bold;transform:scaleX(0.8856);">JUN '18</div>
<div class="t" style="left:903.85px;top:737.99px;font-size:9.420px;color:#6e7c8f;font-weight:bold;transform:scaleX(0.8765);">JUL '18</div>
<div class="t" style="left:988.50px;top:737.99px;font-size:9.420px;color:#6e7c8f;font-weight:bold;transform:scaleX(0.8656);">AUG '18</div>
<div class="t" style="left:1075.37px;top:737.99px;font-size:9.420px;color:#6e7c8f;font-weight:bold;transform:scaleX(0.8662);">SEP '18</div>
<div class="t" style="left:1157.68px;top:737.99px;font-size:9.420px;color:#6e7c8f;font-weight:bold;transform:scaleX(0.8752);">OCT '18</div>
<div class="t" style="left:619.00px;top:778.99px;font-size:9.420px;color:#262d39;font-weight:bold;transform:scaleX(1.0698);-webkit-text-stroke:0.2px currentColor;">Approved</div>
<div class="t" style="left:619.00px;top:792.99px;font-size:9.420px;color:#262d39;transform:scaleX(1.1332);">Earned Media</div>
<div class="t" style="left:747.00px;top:776.99px;font-size:9.420px;color:#262d39;font-weight:bold;transform:scaleX(1.0403);-webkit-text-stroke:0.2px currentColor;">Approved &</div>
<div class="t" style="left:747.00px;top:789.99px;font-size:9.420px;color:#262d39;font-weight:bold;transform:scaleX(1.0520);-webkit-text-stroke:0.2px currentColor;">Permissioned</div>
<div class="t" style="left:815.50px;top:789.99px;font-size:9.420px;color:#262d39;transform:scaleX(1.1332);">Earned Media</div>
<div class="t" style="left:311.00px;top:316.77px;font-size:28.500px;color:#6e7c8f;-webkit-text-stroke:0.25px #fff;">$</div>
</body></html>
